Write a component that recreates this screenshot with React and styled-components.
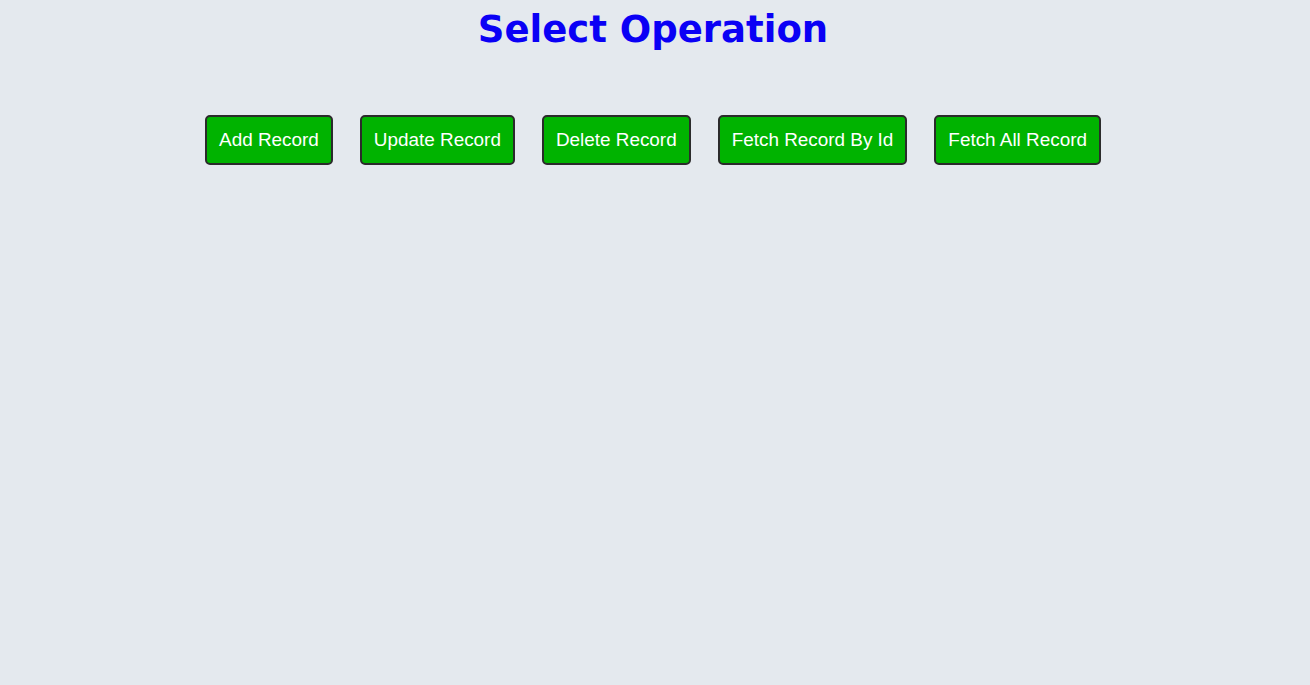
import React from 'react'
import styled, { createGlobalStyle } from 'styled-components'

const GlobalStyle = createGlobalStyle`
  html, body {
    margin: 0;
    padding: 0;
    background: #e4e9ee;
  }
  body {
    font-family: "Liberation Sans", Arial, sans-serif;
  }
`

const operations = [
  'Add Record',
  'Update Record',
  'Delete Record',
  'Fetch Record By Id',
  'Fetch All Record',
]

function App() {
  return (
    <Page>
      <GlobalStyle />
      <Title>Select Operation</Title>
      <ButtonRow>
        {operations.map(op => (
          <OpButton key={op} type="button">{op}</OpButton>
        ))}
      </ButtonRow>
    </Page>
  )
}

export default App

const Page = styled.div`
  min-height: 685px;
  padding: 4px 4px 0 0;
`
const Title = styled.h1`
  margin: 0;
  text-align: center;
  color: #0a00f5;
  font-family: "DejaVu Sans", Verdana, sans-serif;
  font-size: 37px;
  font-weight: bold;
  line-height: 52px;
`
const ButtonRow = styled.div`
  display: flex;
  justify-content: center;
  gap: 27px;
  margin-top: 59px;
`
const OpButton = styled.button`
  height: 50px;
  padding: 0 12px;
  background: #00b300;
  color: #fff;
  border: 2px solid #2b2b2b;
  border-radius: 5px;
  font-family: "Liberation Sans", Arial, sans-serif;
  font-size: 18.9px;
  cursor: pointer;
`
